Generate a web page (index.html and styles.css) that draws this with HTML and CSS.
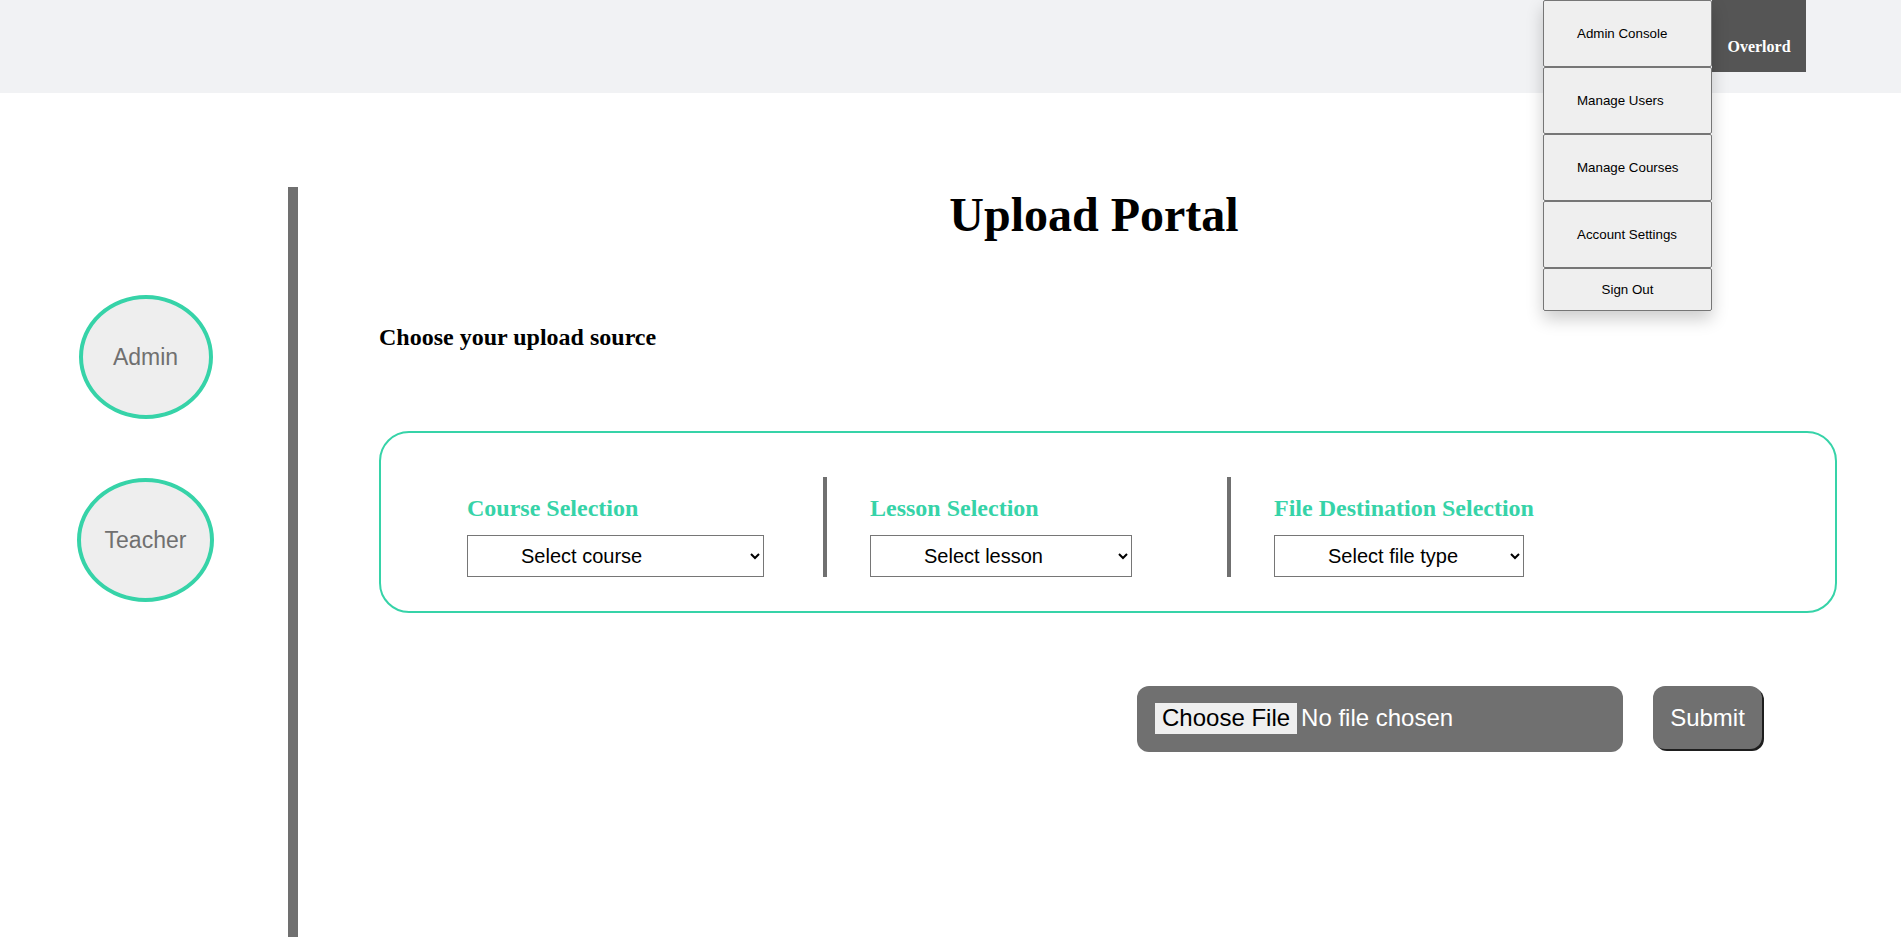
FILE: index.html
```html
<!DOCTYPE html>
<html lang="en">
<head>
<meta charset="utf-8">
<title>Upload Portal</title>
<link rel="stylesheet" href="styles.css">
</head>
<body>
<header class="topbar">
  <div class="user">
    <span class="user-name">Overlord</span>
    <div class="dropdown">
      <button class="menu-item">Admin Console</button>
      <button class="menu-item">Manage Users</button>
      <button class="menu-item">Manage Courses</button>
      <button class="menu-item">Account Settings</button>
      <button class="menu-item menu-signout">Sign Out</button>
    </div>
  </div>
</header>
<div class="layout">
  <aside class="sidebar">
    <button class="role role-admin">Admin</button>
    <button class="role role-teacher">Teacher</button>
  </aside>
  <main class="content">
    <h1 class="title">Upload Portal</h1>
    <h2 class="subtitle">Choose your upload source</h2>
    <section class="selection-box">
      <div class="col">
        <h3 class="col-label">Course Selection</h3>
        <select class="picker picker-course"><option>Select course</option></select>
      </div>
      <div class="col col-divided">
        <h3 class="col-label">Lesson Selection</h3>
        <select class="picker picker-lesson"><option>Select lesson</option></select>
      </div>
      <div class="col col-divided">
        <h3 class="col-label">File Destination Selection</h3>
        <select class="picker picker-type"><option>Select file type</option></select>
      </div>
    </section>
    <form class="upload-row">
      <input type="file" class="file-input">
      <button type="button" class="submit">Submit</button>
    </form>
  </main>
</div>
</body>
</html>
```
FILE: styles.css
```css
* { box-sizing: border-box; }
html, body { margin: 0; padding: 0; background: #fff; }
body { font-family: "Liberation Serif", "Times New Roman", serif; color: #000; }

.topbar {
  height: 93px;
  background: #f1f2f4;
  display: flex;
  justify-content: flex-end;
  align-items: flex-start;
  padding-right: 95px;
}
.user { position: relative; }
.user-name {
  display: block;
  width: 94px;
  height: 72px;
  background: #555555;
  color: #fff;
  font-weight: bold;
  font-size: 16px;
  line-height: 18px;
  text-align: center;
  padding-top: 38px;
}
.dropdown {
  position: absolute;
  top: 0;
  right: 100%;
  width: 169px;
  display: flex;
  flex-direction: column;
  box-shadow: 0 8px 16px 0 rgba(0,0,0,0.2);
  z-index: 5;
}
.menu-item {
  height: 67px;
  margin: 0;
  background: #efefef;
  border: 1px solid #767676;
  border-radius: 2px;
  font-family: "Liberation Sans", Arial, sans-serif;
  font-size: 13.33px;
  color: #000;
  text-align: left;
  padding: 0 0 0 33px;
}
.menu-signout { height: 43px; text-align: center; padding: 0; }

.layout { display: flex; margin-top: 94px; min-height: calc(100vh - 187px); }
.sidebar {
  width: 298px;
  flex: none;
  border-right: 10px solid #707070;
  display: flex;
  flex-direction: column;
  align-items: center;
  padding: 108px 0 0 3px;
  gap: 59px;
}
.role {
  width: 136px;
  height: 124px;
  border-radius: 50%;
  border: 4px solid #36d3a8;
  background: #eeeeee;
  color: #707070;
  font-family: "Liberation Sans", Arial, sans-serif;
  font-size: 23px;
  padding: 0;
  margin: 0;
}
.role-admin { width: 134px; }
.role-teacher { width: 137px; }

.content { flex: 1; padding: 0 64px 0 81px; }
.title {
  margin: 0;
  font-size: 48px;
  font-weight: bold;
  text-align: center;
  padding-right: 28px;
}
.subtitle {
  margin: 82px 0 0;
  font-size: 24px;
  font-weight: bold;
}
.selection-box {
  margin-top: 80px;
  border: 2px solid #36d3a8;
  border-radius: 30px;
  padding: 44px 0 34px 42px;
  display: flex;
}
.col {
  width: 400px;
  height: 100px;
  padding: 17px 0 0 44px;
}
.col-divided { width: 404px; border-left: 4px solid #707070; padding-left: 43px; }
.col-label {
  margin: 0 0 13px;
  font-size: 24px;
  font-weight: bold;
  color: #36d3a8;
  line-height: 28px;
}
.picker {
  display: block;
  height: 42px;
  border: 1px solid #767676;
  border-radius: 0;
  background: #fff;
  font-family: "Liberation Sans", Arial, sans-serif;
  font-size: 20px;
  color: #000;
  text-align: left;
  padding-left: 49px;
}
.picker-course { width: 297px; }
.picker-lesson { width: 262px; }
.picker-type { width: 250px; }

.upload-row {
  margin-top: 73px;
  display: flex;
  justify-content: flex-end;
  align-items: flex-start;
  gap: 30px;
  padding-right: 75px;
}
.file-input {
  width: 486px;
  height: 66px;
  background: #707070;
  border-radius: 12px;
  padding: 17px 18px;
  color: #fff;
  font-family: "Liberation Sans", Arial, sans-serif;
  font-size: 24px;
}
.file-input::file-selector-button {
  background: #efefef;
  border: none;
  border-radius: 0;
  color: #000;
  font-family: "Liberation Sans", Arial, sans-serif;
  font-size: 24px;
  padding: 1px 7px 2px;
  margin: 0 4px 0 0;
}
.submit {
  width: 109px;
  height: 63px;
  background: #707070;
  color: #fff;
  border: none;
  border-radius: 12px;
  box-shadow: 2px 2px 0 #1e1e1e;
  font-family: "Liberation Sans", Arial, sans-serif;
  font-size: 24px;
  padding: 0;
}
```
